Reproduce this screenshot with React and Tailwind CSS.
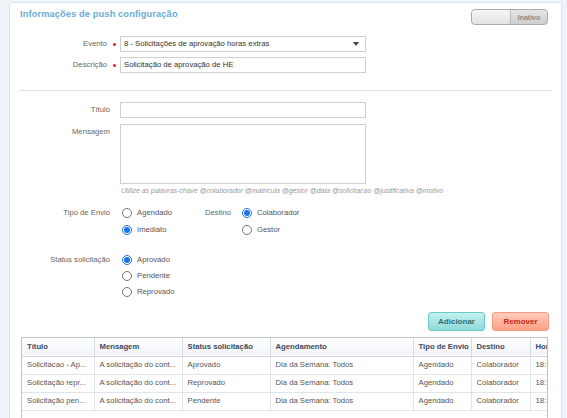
function Radio({ checked }) {
  return checked ? (
    <span className="w-[10px] h-[10px] rounded-full border border-[#1a73e8] flex items-center justify-center shrink-0">
      <span className="w-[6px] h-[6px] rounded-full bg-[#1a73e8]" />
    </span>
  ) : (
    <span className="w-[10px] h-[10px] rounded-full border border-[#767676] bg-white shrink-0" />
  )
}

function RadioItem({ label, checked, h = 'h-[17px]' }) {
  return (
    <div className={`flex items-center gap-[5px] ${h}`}>
      <Radio checked={checked} />
      <span className="text-[#555]">{label}</span>
    </div>
  )
}

function Label({ children, required }) {
  return (
    <div className="w-[98px] shrink-0 flex items-center justify-end text-[#666]">
      <span>{children}</span>
      {required ? (
        <span className="ml-[6px] mr-[1px] w-[3px] h-[3px] rounded-full bg-[#e0201c]" />
      ) : (
        <span className="w-[7px]" />
      )}
    </div>
  )
}

const colunas = [
  { nome: 'Título', w: 'w-[72px]' },
  { nome: 'Mensagem', w: 'w-[88px]' },
  { nome: 'Status solicitação', w: 'w-[88px]' },
  { nome: 'Agendamento', w: 'w-[143px]' },
  { nome: 'Tipo de Envio', w: 'w-[58px]' },
  { nome: 'Destino', w: 'w-[59px]' },
  { nome: 'Hora', w: 'w-[60px]' },
]

const linhas = [
  ['Solicitacao - Ap...', 'A solicitação do cont...', 'Aprovado', 'Dia da Semana: Todos', 'Agendado', 'Colaborador', '18:30'],
  ['Solicitação repr...', 'A solicitação do cont...', 'Reprovado', 'Dia da Semana: Todos', 'Agendado', 'Colaborador', '18:30'],
  ['Solicitação pen...', 'A solicitação do cont...', 'Pendente', 'Dia da Semana: Todos', 'Agendado', 'Colaborador', '18:30'],
]

export default function App() {
  return (
    <div className="min-h-screen bg-[#eef4fa] pt-[2px] pl-[9px] text-[7.7px] leading-none" style={{ fontFamily: '"Liberation Sans", Arial, sans-serif' }}>
      <div className="w-[553px] min-h-[430px] bg-white border border-[#dbe5ee] rounded-tl-[3px]">
        {/* Cabeçalho */}
        <div className="flex items-start justify-between pl-[10px] pr-[13px]">
          <h2 className="pt-[5px] text-[9.3px] leading-[12px] font-bold text-[#68acd9] tracking-[0.1px]">
            Informações de push configuração
          </h2>
          <div className="mt-[6px] w-[77px] h-[16px] rounded-[4px] border border-[#a9a9a9] bg-gradient-to-b from-[#e4e4e4] to-[#cfcfcf] flex overflow-hidden">
            <div className="w-[39px] h-full bg-gradient-to-b from-[#f6f6f6] to-[#e2e2e2] border-r border-[#b8b8b8] rounded-[3px]" />
            <div className="flex-1 flex items-center justify-center text-[7px] font-bold text-[#8a8a8a]">Inativo</div>
          </div>
        </div>

        <div className="px-[9px]">
          {/* Evento / Descrição */}
          <div className="mt-[11px] flex flex-col gap-[5px]">
            <div className="flex h-[16px]">
              <Label required>Evento</Label>
              <div className="ml-[3px] w-[246px] h-[16px] border border-[#cfcfcf] flex items-center justify-between pl-[3px] pr-[6px] text-[#333]">
                <span>8 - Solicitações de aprovação horas extras</span>
                <span className="w-0 h-0 border-l-[3px] border-r-[3px] border-t-[4px] border-l-transparent border-r-transparent border-t-[#444]" />
              </div>
            </div>
            <div className="flex h-[16px]">
              <Label required>Descrição</Label>
              <div className="ml-[3px] w-[246px] h-[16px] border border-[#cfcfcf] flex items-center pl-[3px] text-[#333]">
                Solicitação de aprovação de HE
              </div>
            </div>
          </div>

          <div className="mt-[17px] h-px bg-[#e2e2e2]" />

          {/* Título / Mensagem */}
          <div className="mt-[11px] flex h-[16px]">
            <Label>Título</Label>
            <div className="ml-[3px] w-[246px] h-[16px] border border-[#cfcfcf]" />
          </div>
          <div className="mt-[6px] flex">
            <div className="w-[98px] shrink-0 text-right pr-[7px] pt-[4px] text-[#666]">Mensagem</div>
            <div className="ml-[3px] w-[246px] h-[60px] border border-[#cfcfcf]" />
          </div>
          <div className="mt-[2px] ml-[102px] italic text-[6.9px] text-[#999] leading-[10px]">
            Utilize as palavras-chave @colaborador @matricula @gestor @data @solicitacao @justificativa @motivo
          </div>

          {/* Tipo de Envio / Destino */}
          <div className="mt-[8px] flex">
            <div className="w-[98px] shrink-0 text-right pr-[7px] h-[17px] flex items-center justify-end text-[#666]">Tipo de Envio</div>
            <div className="ml-[5px] w-[83px]">
              <RadioItem label="Agendado" />
              <RadioItem label="Imediato" checked />
            </div>
            <div className="w-[32px] h-[17px] flex items-center text-[#666]">Destino</div>
            <div className="ml-[5px]">
              <RadioItem label="Colaborador" checked />
              <RadioItem label="Gestor" />
            </div>
          </div>

          {/* Status solicitação */}
          <div className="mt-[14px] flex">
            <div className="w-[98px] shrink-0 pr-[7px] h-[16px] flex items-center justify-end text-[#666]">Status solicitação</div>
            <div className="ml-[5px]">
              <RadioItem label="Aprovado" checked h="h-[16px]" />
              <RadioItem label="Pendente" h="h-[16px]" />
              <RadioItem label="Reprovado" h="h-[16px]" />
            </div>
          </div>

          {/* Botões */}
          <div className="mt-[12px] flex justify-end gap-[7px] pr-[3px]">
            <button className="w-[57px] h-[19px] rounded-[3px] border border-[#6ccaca] bg-gradient-to-b from-[#c4f1f1] to-[#8fd9d9] text-[8px] font-bold text-[#2b6f75]">
              Adicionar
            </button>
            <button className="w-[57px] h-[19px] rounded-[3px] border border-[#f59a80] bg-gradient-to-b from-[#ffcdb9] to-[#ff9f84] text-[8px] font-bold text-[#c4281b]">
              Remover
            </button>
          </div>

          {/* Tabela */}
          <div className="mt-[6px] ml-[2px] w-[527px] h-[90px] border border-[#b9c3d0] overflow-hidden">
            <table className="table-fixed border-collapse w-[568px]">
              <thead>
                <tr className="h-[18px] bg-gradient-to-b from-white to-[#f2f4f7] border-b border-[#cfd6df]">
                  {colunas.map((c) => (
                    <th key={c.nome} className={`${c.w} px-[5px] text-left font-bold text-[#3a4a5e] border-r border-[#d5dbe3] whitespace-nowrap overflow-hidden`}>
                      {c.nome}
                    </th>
                  ))}
                </tr>
              </thead>
              <tbody>
                {linhas.map((linha, i) => (
                  <tr key={i} className="h-[18px] border-b border-[#e1e5ea]">
                    {linha.map((cel, j) => (
                      <td key={j} className="px-[5px] text-[#555] border-r border-[#e1e5ea] whitespace-nowrap overflow-hidden">
                        {cel}
                      </td>
                    ))}
                  </tr>
                ))}
              </tbody>
            </table>
          </div>
        </div>
      </div>
    </div>
  )
}
